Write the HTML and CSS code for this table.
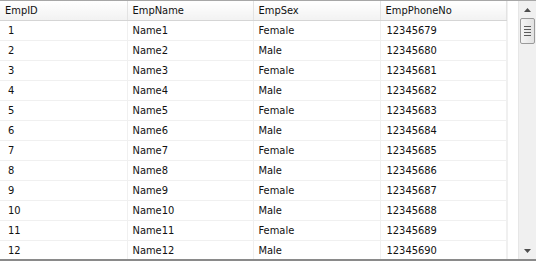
FILE: index.html
```html
<!DOCTYPE html>
<html>
<head>
<meta charset="utf-8">
<link rel="stylesheet" href="styles.css">
</head>
<body>
<div class="grid-view">
  <div class="grid-body">
    <table class="data">
      <colgroup><col class="c1"><col class="c2"><col class="c3"><col class="c4"></colgroup>
      <thead>
        <tr><th>EmpID</th><th>EmpName</th><th>EmpSex</th><th>EmpPhoneNo</th></tr>
      </thead>
      <tbody>
        <tr><td>1</td><td>Name1</td><td>Female</td><td>12345679</td></tr>
        <tr><td>2</td><td>Name2</td><td>Male</td><td>12345680</td></tr>
        <tr><td>3</td><td>Name3</td><td>Female</td><td>12345681</td></tr>
        <tr><td>4</td><td>Name4</td><td>Male</td><td>12345682</td></tr>
        <tr><td>5</td><td>Name5</td><td>Female</td><td>12345683</td></tr>
        <tr><td>6</td><td>Name6</td><td>Male</td><td>12345684</td></tr>
        <tr><td>7</td><td>Name7</td><td>Female</td><td>12345685</td></tr>
        <tr><td>8</td><td>Name8</td><td>Male</td><td>12345686</td></tr>
        <tr><td>9</td><td>Name9</td><td>Female</td><td>12345687</td></tr>
        <tr><td>10</td><td>Name10</td><td>Male</td><td>12345688</td></tr>
        <tr><td>11</td><td>Name11</td><td>Female</td><td>12345689</td></tr>
        <tr><td>12</td><td>Name12</td><td>Male</td><td>12345690</td></tr>
      </tbody>
    </table>
    <div class="filler"></div>
  </div>
  <div class="scrollbar">
    <div class="arrow up"><svg width="7" height="4" viewBox="0 0 7 4"><path d="M3.5 0L7 4H0z" fill="#4d4d4d"/></svg></div>
    <div class="thumb"><span class="grip"></span><span class="grip"></span><span class="grip"></span><span class="grip"></span></div>
    <div class="track"></div>
    <div class="arrow down"><svg width="7" height="4" viewBox="0 0 7 4"><path d="M0 0H7L3.5 4z" fill="#4d4d4d"/></svg></div>
  </div>
</div>
</body>
</html>
```
FILE: styles.css
```css
html, body { margin: 0; padding: 0; background: #fff; }
.grid-view {
  width: 536px;
  height: 261px;
  box-sizing: border-box;
  display: flex;
  border-top: 1px solid #a7a7a7;
  border-bottom: 2px solid #8a8a8a;
  font-family: "DejaVu Sans Condensed", "DejaVu Sans", Tahoma, sans-serif;
  font-stretch: condensed;
  font-size: 11px;
  color: #111;
  overflow: hidden;
}
.grid-body { flex: 1; display: flex; overflow: hidden; }
.data { border-collapse: collapse; table-layout: fixed; width: 506px; }
.c1 { width: 127px; } .c2 { width: 126px; } .c3 { width: 127px; } .c4 { width: 126px; }
.data th {
  height: 19px;
  padding: 0 0 0 5px;
  text-align: left;
  font-weight: normal;
  background: linear-gradient(#ffffff, #f2f2f2);
  border-right: 1px solid #e3e3e3;
  border-bottom: 1px solid #d5d5d5;
  white-space: nowrap;
}
.data td {
  height: 19px;
  padding: 0 0 0 8px;
  border-right: 1px solid #f0f0f0;
  border-bottom: 1px solid #f0f0f0;
  white-space: nowrap;
}
.data td:nth-child(2) { padding-left: 5px; }
.data td:nth-child(3) { padding-left: 5px; }
.data td:nth-child(4) { padding-left: 6px; }
.filler { flex: 1; border-left: 1px solid #f0f0f0; }
.scrollbar {
  width: 17px;
  display: flex;
  flex-direction: column;
  background: #f0f0f0;
  border-left: 1px solid #e6e6e6;
}
.arrow { height: 17px; display: flex; align-items: center; justify-content: center; }
.thumb {
  height: 26px;
  margin: 0 1px;
  box-sizing: border-box;
  border: 1px solid #9a9a9a;
  border-radius: 2px;
  background: linear-gradient(90deg, #f4f4f4, #e2e2e2);
  display: flex;
  flex-direction: column;
  align-items: center;
  justify-content: center;
  gap: 2px;
}
.grip { display: block; width: 7px; height: 1px; background: #5a5a5a; }
.track { flex: 1; }
```
